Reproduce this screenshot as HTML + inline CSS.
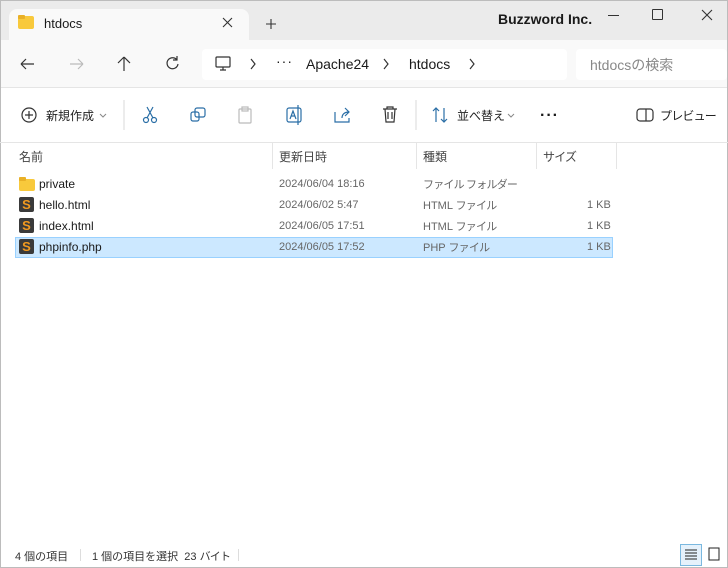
<!DOCTYPE html>
<html><head><meta charset="utf-8"><style>
*{margin:0;padding:0;box-sizing:border-box}
body{width:728px;height:568px;overflow:hidden;background:#fff;font-family:"Liberation Sans","Noto Sans CJK JP",sans-serif;color:#1a1a1a;position:relative}
.a{position:absolute;white-space:nowrap}
.g{color:#666}
.k{letter-spacing:-0.8px}
svg{position:absolute}
</style></head><body>
<div class="a" style="left:0;top:0;width:728px;height:568px;border:1px solid #bcbcbc"></div>
<div class="a" style="left:1px;top:1px;width:726px;height:39px;background:#ebebeb"></div>
<div class="a" style="left:9px;top:9px;width:240px;height:32px;background:#f9f9f9;border-radius:8px 8px 0 0"></div>
<div class="a" style="left:18px;top:16px;width:16px;height:13px;background:#f8c93c;border-radius:2px"></div>
<div class="a" style="left:18px;top:15px;width:7px;height:4px;background:#e9b027;border-radius:1px"></div>
<div class="a" style="left:44px;top:16px;font-size:13px">htdocs</div>
<svg width="728" height="40" style="left:0;top:0" fill="none" stroke="#333" stroke-width="1.1">
<path d="M223 18l9 9M232 18l-9 9"/>
<path d="M266 24h10M271 19v10"/>
<path d="M702 10l10 10M712 10l-10 10"/>
</svg>
<div class="a" style="left:498px;top:11px;font-size:14px;font-weight:bold">Buzzword Inc.</div>
<div class="a" style="left:608px;top:15px;width:11px;height:1px;background:#333"></div>
<div class="a" style="left:652px;top:9px;width:11px;height:11px;border:1px solid #333;border-radius:1px"></div>
<div class="a" style="left:1px;top:40px;width:726px;height:48px;background:#f9f9f9;border-bottom:1px solid #e5e5e5"></div>
<div class="a" style="left:202px;top:49px;width:365px;height:31px;background:#fff;border-radius:4px"></div>
<div class="a" style="left:576px;top:49px;width:151px;height:31px;background:#fff;border-radius:4px"></div>
<svg width="728" height="140" style="left:0;top:0" fill="none" stroke="#333" stroke-width="1.2">
<path d="M21 64h13M21 64l5-5M21 64l5 5"/>
<path d="M70 64h13M83 64l-5-5M83 64l-5 5" stroke="#bbb"/>
<path d="M124 71V57M124 57l-6 6M124 57l6 6"/>
<path d="M177 60a5.5 5.5 0 1 0 1 4M177 56v4h-4"/>
<rect x="216" y="57" width="14" height="10" rx="1"/><path d="M220 70h6M223 67v3"/>
<path d="M251 59l4 5-4 5M384 59l4 5-4 5M470 59l4 5-4 5"/>
<circle cx="29" cy="115" r="7"/><path d="M29 111v8M25 115h8"/>
<path d="M100 114l3 3 3-3" stroke="#888" stroke-width="1"/>
<path d="M124 100v30M416 100v30" stroke="#e0e0e0"/>
<g stroke="#2a6ea6"><circle cx="146" cy="120" r="2.5"/><circle cx="154" cy="120" r="2.5"/><path d="M147 118l6-11M153 118l-6-11"/>
<rect x="191" y="112" width="8" height="9" rx="2"/><rect x="195" y="108" width="10" height="9" rx="2"/>
<rect x="287" y="108" width="14" height="14" rx="2"/><path d="M290 119l3-8 3 8M291 116h4M298 105v20"/>
<path d="M335 112v10h14v-4M342 118c0-4 3-6 7-6M345 108l4 4-4 4"/>
<path d="M436 108v14M433 111l3-3 3 3M444 108v14M441 119l3 3 3-3"/></g>
<g stroke="#bbb"><rect x="239" y="109" width="12" height="14" rx="1"/><rect x="242" y="107" width="6" height="4"/></g>
<path d="M383 109h14M387 109v-2h6v2M385 109l1 13h8l1-13M388 112v7M392 112v7"/>
<path d="M508 114l3 3 3-3" stroke="#888" stroke-width="1"/>
<rect x="637" y="109" width="16" height="12" rx="3"/><path d="M646 109v12"/>
<path d="M137 149l5-4 5 4" stroke="#888"/>
</svg>
<div class="a" style="left:306px;top:56px;font-size:14px">Apache24</div>
<div class="a" style="left:276px;top:53px;font-size:14px;letter-spacing:1px">···</div>
<div class="a" style="left:409px;top:56px;font-size:14px">htdocs</div>
<div class="a" style="left:590px;top:55px;font-size:14px;color:#888">htdocsの検索</div>
<div class="a" style="left:46px;top:107px;font-size:12px;color:#222">新規作成</div>
<div class="a" style="left:457px;top:107px;font-size:12px;color:#222">並べ替え</div>
<div class="a" style="left:540px;top:107px;font-size:16px;font-weight:bold;letter-spacing:1px">···</div>
<div class="a k" style="left:660px;top:107px;font-size:12px;color:#222">プレビュー</div>
<div class="a" style="left:0;top:142px;width:728px;height:1px;background:#e5e5e5"></div>
<div class="a" style="left:272px;top:143px;width:1px;height:26px;background:#e5e5e5"></div>
<div class="a" style="left:416px;top:143px;width:1px;height:26px;background:#e5e5e5"></div>
<div class="a" style="left:536px;top:143px;width:1px;height:26px;background:#e5e5e5"></div>
<div class="a" style="left:616px;top:143px;width:1px;height:26px;background:#e5e5e5"></div>
<div class="a" style="left:19px;top:148px;font-size:12px;color:#444">名前</div>
<div class="a" style="left:279px;top:148px;font-size:12px;color:#444">更新日時</div>
<div class="a" style="left:423px;top:148px;font-size:12px;color:#444">種類</div>
<div class="a k" style="left:543px;top:148px;font-size:12px;color:#444">サイズ</div>
<div class="a" style="left:15px;top:237px;width:598px;height:21px;background:#cce8ff;border:1px solid #99d1ff"></div>
<div class="a" style="left:19px;top:179px;width:16px;height:12px;background:#f8c93c;border-radius:2px"></div>
<div class="a" style="left:19px;top:177px;width:7px;height:4px;background:#e9b027;border-radius:1px"></div>
<div class="a" style="left:19px;top:197px;width:15px;height:15px;background:#3a3a3a;border-radius:2px;color:#f29a1f;font-weight:bold;font-size:13px;text-align:center;line-height:15px">S</div>
<div class="a" style="left:19px;top:218px;width:15px;height:15px;background:#3a3a3a;border-radius:2px;color:#f29a1f;font-weight:bold;font-size:13px;text-align:center;line-height:15px">S</div>
<div class="a" style="left:19px;top:239px;width:15px;height:15px;background:#3a3a3a;border-radius:2px;color:#f29a1f;font-weight:bold;font-size:13px;text-align:center;line-height:15px">S</div>
<div class="a" style="left:39px;top:177px;font-size:12px">private</div>
<div class="a" style="left:39px;top:198px;font-size:12px">hello.html</div>
<div class="a" style="left:39px;top:219px;font-size:12px">index.html</div>
<div class="a" style="left:39px;top:240px;font-size:12px">phpinfo.php</div>
<div class="a g" style="left:279px;top:178px;font-size:11px">2024/06/04 18:16</div>
<div class="a g" style="left:279px;top:199px;font-size:11px">2024/06/02 5:47</div>
<div class="a g" style="left:279px;top:220px;font-size:11px">2024/06/05 17:51</div>
<div class="a g" style="left:279px;top:241px;font-size:11px">2024/06/05 17:52</div>
<div class="a g k" style="left:423px;top:176px;font-size:11px">ファイル フォルダー</div>
<div class="a g" style="left:423px;top:197px;font-size:11px">HTML <span class="k">ファイル</span></div>
<div class="a g" style="left:423px;top:218px;font-size:11px">HTML <span class="k">ファイル</span></div>
<div class="a g" style="left:423px;top:239px;font-size:11px">PHP <span class="k">ファイル</span></div>
<div class="a g" style="left:587px;top:199px;font-size:11px">1 KB</div>
<div class="a g" style="left:587px;top:220px;font-size:11px">1 KB</div>
<div class="a g" style="left:587px;top:241px;font-size:11px">1 KB</div>
<div class="a" style="left:15px;top:548px;font-size:11px;color:#333">4 個の項目</div>
<div class="a" style="left:80px;top:549px;width:1px;height:12px;background:#ddd"></div>
<div class="a" style="left:92px;top:548px;font-size:11px;color:#333">1 個の項目を選択&nbsp; 23 <span class="k">バイト</span></div>
<div class="a" style="left:238px;top:549px;width:1px;height:12px;background:#ddd"></div>
<div class="a" style="left:680px;top:544px;width:22px;height:22px;background:#e5f1fb;border:1px solid #7ab8df"></div>
<svg width="728" height="568" style="left:0;top:0" stroke="#222" stroke-width="1" fill="none"><path d="M685 550h12M685 553h12M685 556h12M685 559h12"/><rect x="709" y="548" width="10" height="12"/></svg>
</body></html>
